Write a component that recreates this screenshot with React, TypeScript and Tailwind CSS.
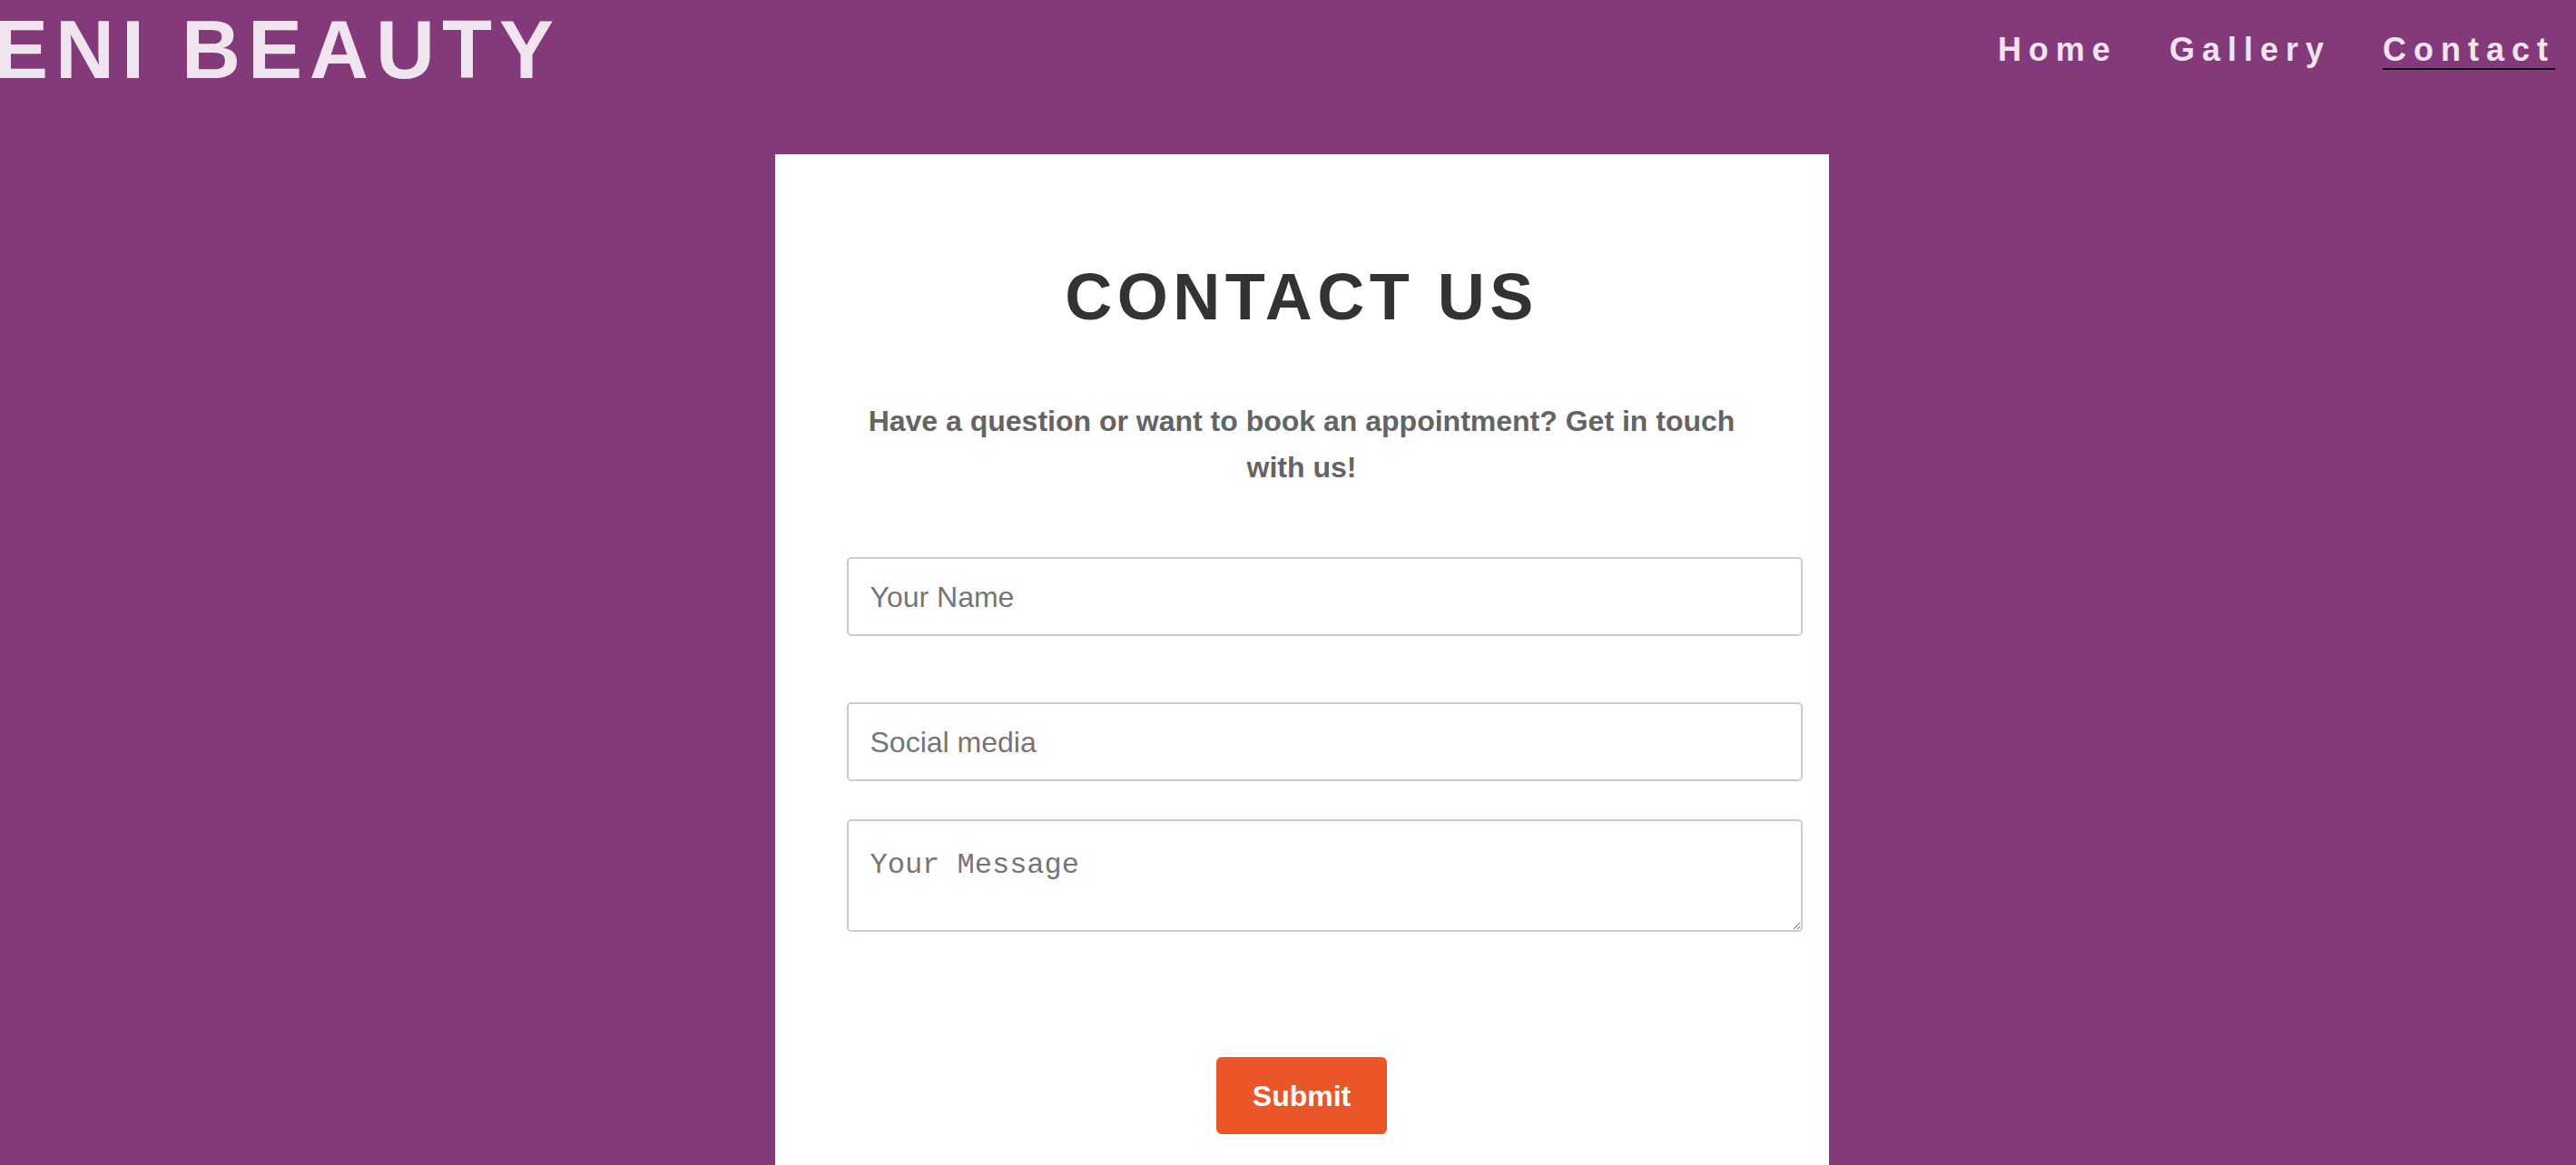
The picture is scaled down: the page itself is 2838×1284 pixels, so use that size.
const navLinks = [
  { label: "Home", active: false },
  { label: "Gallery", active: false },
  { label: "Contact", active: true },
];

function Header() {
  return (
    <header className="flex h-[170px] items-start justify-between">
      <div className="ml-[-7px] mt-[10px] whitespace-nowrap text-[90px] font-bold leading-none tracking-[8px] text-[#f0e4ef]">
        ENI BEAUTY
      </div>
      <nav className="mt-[37px] flex gap-[57px] pr-[23px]">
        {navLinks.map(({ label, active }) => (
          <a
            key={label}
            href="#"
            className={
              active
                ? "inline-block border-b-2 border-black pb-[2px] text-[36px] font-bold leading-none tracking-[8px] text-[#f0e4ef]"
                : "inline-block pb-[4px] text-[36px] font-bold leading-none tracking-[8px] text-[#f0e4ef]"
            }
          >
            {label}
          </a>
        ))}
      </nav>
    </header>
  );
}

function ContactCard() {
  return (
    <section className="box-border w-[1161px] bg-white px-[80px] pb-[120px] pt-[121px]">
      <h1 className="text-center text-[72px] font-bold leading-none tracking-[5.5px] text-[#333333]">
        CONTACT US
      </h1>
      <p className="mt-[76px] text-center text-[32px] font-bold leading-[51px] text-[#646464]">
        Have a question or want to book an appointment? Get in touch with us!
      </p>

      {/* inputs are content-box, so they run past the right padding like the original */}
      <form onSubmit={(e) => e.preventDefault()}>
        <input
          type="text"
          placeholder="Your Name"
          className="ml-[-1px] mt-[73px] box-content block h-[35px] w-full rounded-[5px] border-2 border-[#cccccc] px-[24px] py-[24px] font-['Liberation_Sans',Arial,sans-serif] text-[32px] text-[#333333] placeholder:text-[#757575] focus:outline-none"
        />
        <input
          type="text"
          placeholder="Social media"
          className="ml-[-1px] mt-[73px] box-content block h-[35px] w-full rounded-[5px] border-2 border-[#cccccc] px-[24px] py-[24px] font-['Liberation_Sans',Arial,sans-serif] text-[32px] text-[#333333] placeholder:text-[#757575] focus:outline-none"
        />
        <textarea
          placeholder="Your Message"
          className="ml-[-1px] mt-[42px] box-content block h-[70px] w-full rounded-[5px] border-2 border-[#cccccc] px-[24px] py-[25px] font-['Liberation_Mono','Courier_New',monospace] text-[32px] text-[#333333] placeholder:text-[#757575] focus:outline-none"
        />
        <div className="mt-[138px] flex justify-center">
          <button
            type="submit"
            className="h-[85px] rounded-[6px] bg-[#eb5628] px-[40px] text-[32px] font-bold text-white"
          >
            Submit
          </button>
        </div>
      </form>
    </section>
  );
}

export default function App() {
  return (
    <div className="h-[1284px] w-full overflow-hidden bg-[#84397a] font-['Liberation_Sans',Arial,sans-serif]">
      <Header />
      <main className="flex justify-center pl-[30px]">
        <ContactCard />
      </main>
    </div>
  );
}
